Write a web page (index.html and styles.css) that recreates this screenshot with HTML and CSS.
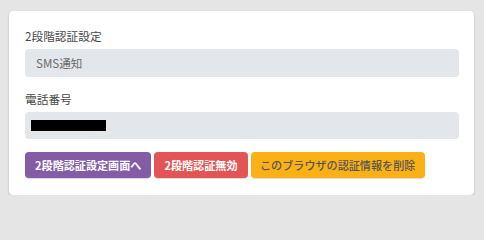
FILE: index.html
```html
<!DOCTYPE html>
<html lang="ja">
<head>
<meta charset="utf-8">
<link rel="stylesheet" href="styles.css">
</head>
<body>
<div class="card">
  <div class="group">
    <div class="label">2段階認証設定</div>
    <div class="field">SMS通知</div>
  </div>
  <div class="group">
    <div class="label">電話番号</div>
    <div class="field field-phone"><span class="redact"></span></div>
  </div>
  <div class="actions">
    <button class="btn btn-purple">2段階認証設定画面へ</button>
    <button class="btn btn-red">2段階認証無効</button>
    <button class="btn btn-yellow">このブラウザの認証情報を削除</button>
  </div>
</div>
</body>
</html>
```
FILE: styles.css
```css
html, body {
  margin: 0;
  padding: 0;
}
body {
  background: #e5e5e5;
  font-family: "Noto Sans CJK JP", "Noto Sans", sans-serif;
  padding: 11px 10px 0 9px;
}
.card {
  background: #ffffff;
  border-radius: 4px;
  box-shadow: 0 1px 2px rgba(60, 60, 90, 0.35);
  padding: 16px 15px 16px 16px;
  height: 152px;
}
.group {
  margin-bottom: 13px;
}
.label {
  font-size: 11.7px;
  line-height: 18px;
  color: #4a4a4a;
  margin-bottom: 4px;
}
.field {
  height: 28px;
  box-sizing: border-box;
  background: #e3e6ea;
  border-radius: 4px;
  padding: 0 11px;
  font-size: 11.6px;
  color: #6b6b6b;
  display: flex;
  align-items: center;
}
.field-phone {
  padding-left: 6px;
  height: 27px;
}
.redact {
  display: block;
  width: 75px;
  height: 11px;
  background: #000000;
}
.actions {
  display: flex;
  gap: 3px;
}
.btn {
  height: 26px;
  padding: 0 10px;
  border: none;
  border-radius: 4px;
  font-family: "Noto Sans CJK JP", "Noto Sans", sans-serif;
  font-size: 11.1px;
  font-weight: 700;
  box-shadow: 0 1px 1px rgba(0, 0, 0, 0.15);
}
.btn-purple {
  background: #845ca5;
  color: #ffffff;
}
.btn-red {
  background: #e35555;
  color: #ffffff;
}
.btn-yellow {
  background: #fbb116;
  color: #555555;
  font-weight: 500;
  padding: 0 9.5px;
}
```
